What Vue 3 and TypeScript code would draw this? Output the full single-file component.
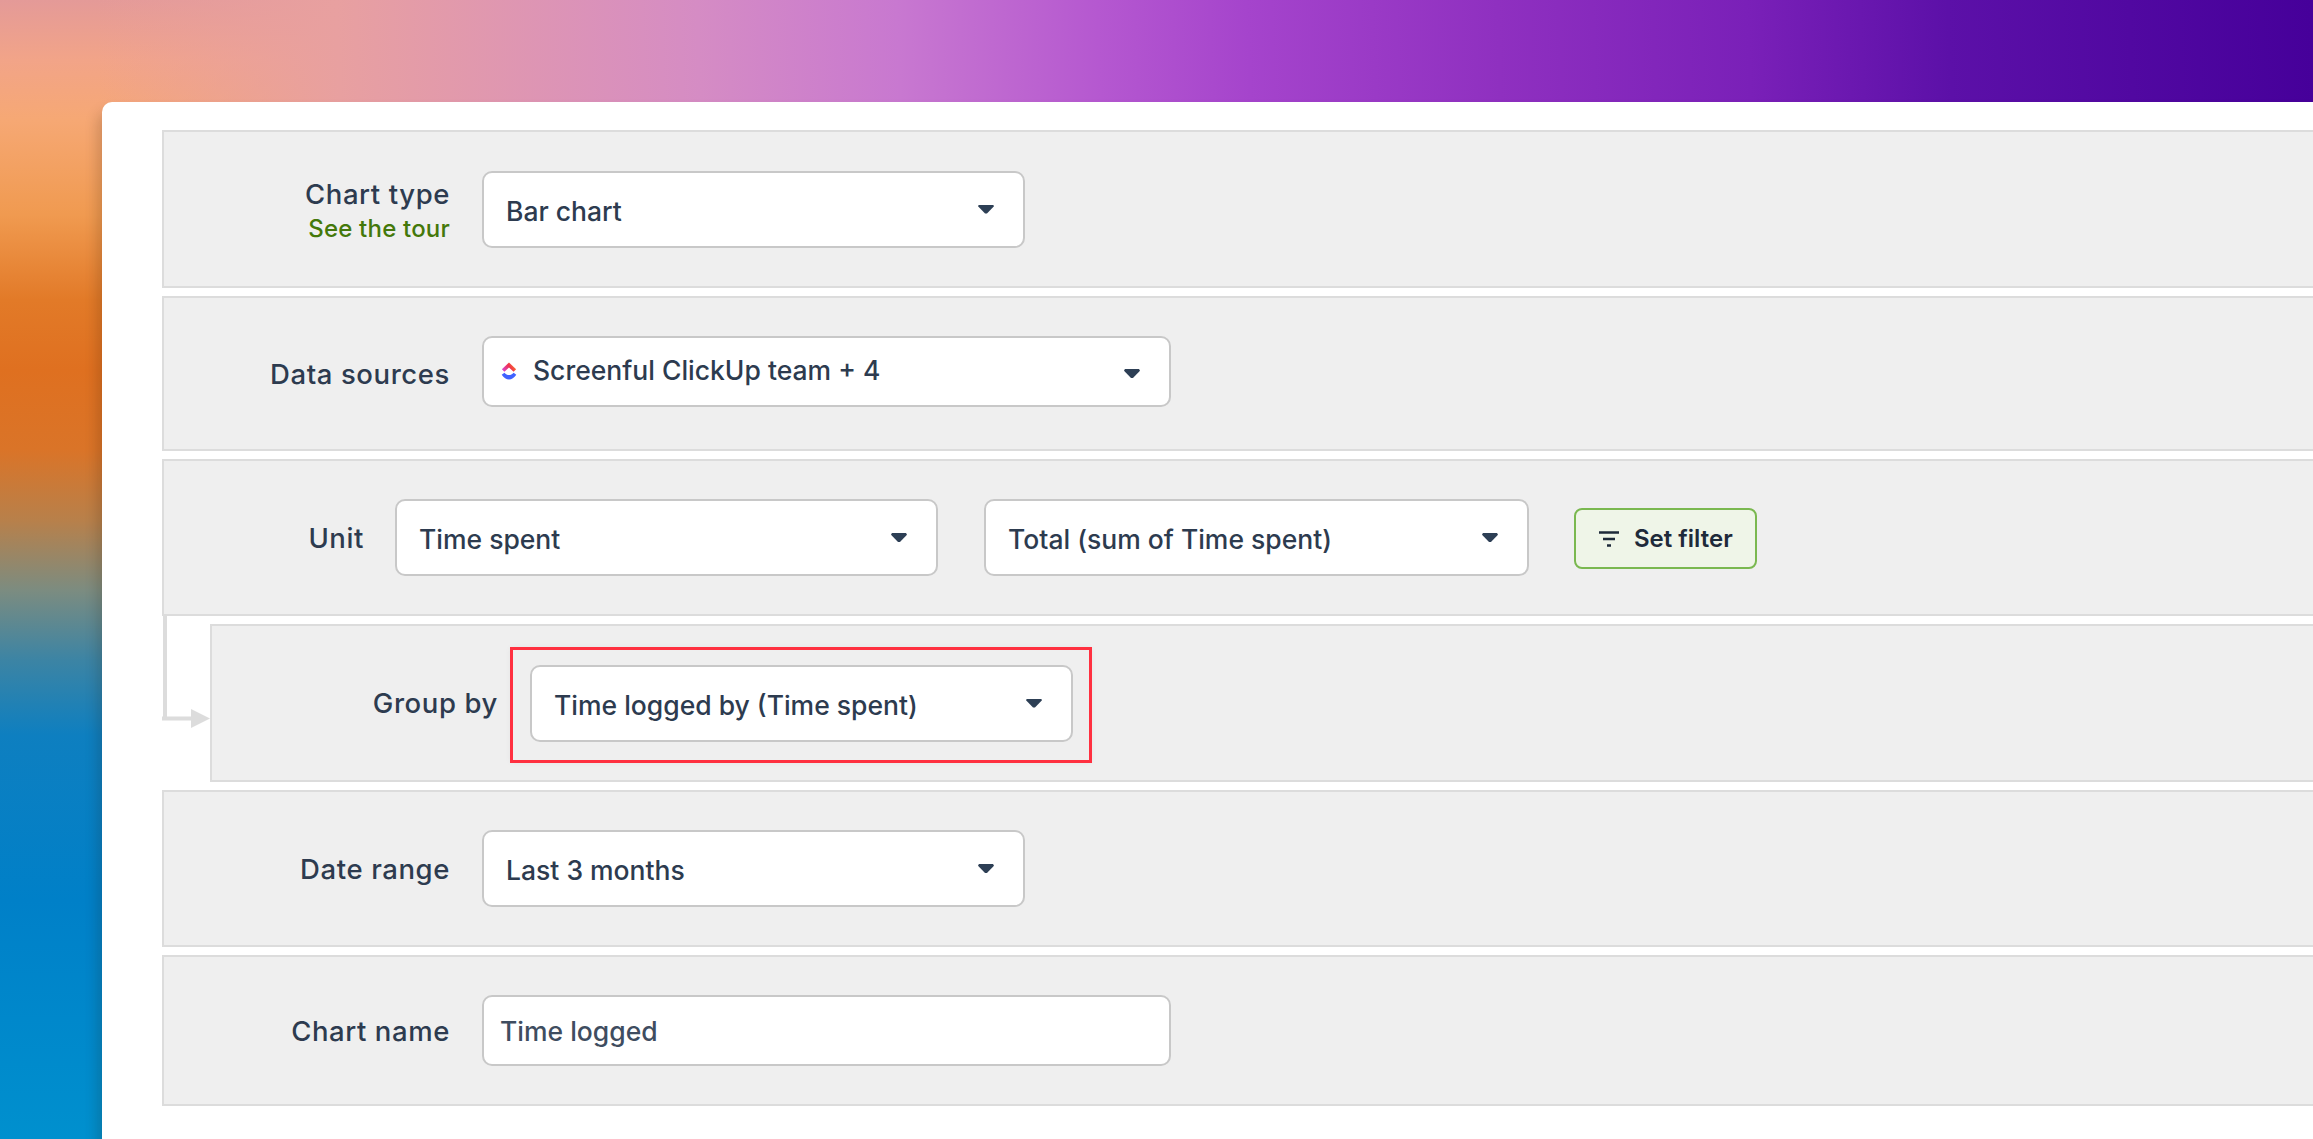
<script setup lang="ts">
interface Field { text: string; width: number }
const unitFields: Field[] = [
  { text: 'Time spent', width: 543 },
  { text: 'Total (sum of Time spent)', width: 545 }
]
</script>

<template>
  <div class="page">
    <main class="card">
      <section class="row h158">
        <div class="label with-link">
          <span>Chart type</span>
          <a class="tour">See the tour</a>
        </div>
        <div class="select wide-543 tall">
          <span class="value">Bar chart</span>
          <span class="caret"></span>
        </div>
      </section>

      <section class="row h155">
        <div class="label source-label">Data sources</div>
        <div class="select wide-689 short source-select">
          <span class="source">
            <svg class="logo" viewBox="0 0 20 24" width="16" height="19">
              <defs>
                <linearGradient id="cu-top" x1="0" x2="1" y1="0.6" y2="0.2">
                  <stop offset="0" stop-color="#d845c8" />
                  <stop offset="0.5" stop-color="#f0304f" />
                  <stop offset="1" stop-color="#fb8a20" />
                </linearGradient>
              </defs>
              <path d="M10 0.500 L19 9 L15.800 12.300 L10 7 L4.200 12.300 L1 9 Z" fill="url(#cu-top)" />
              <path d="M0.800 16 L4.200 13.500 C7.500 17.400 12.500 17.400 15.800 13.500 L19.200 16 C14 24 6 24 0.800 16 Z" fill="#3f62ff" />
            </svg>
            <span class="value source-text">Screenful ClickUp team + 4</span>
          </span>
          <span class="caret source-caret"></span>
        </div>
      </section>

      <section class="row h157 unit-row">
        <div class="label unit-label">Unit</div>
        <div
          v-for="field in unitFields"
          :key="field.text"
          class="select tall"
          :style="{ width: field.width + 'px' }"
        >
          <span class="value">{{ field.text }}</span>
          <span class="caret"></span>
        </div>
        <button class="filter" type="button">
          <svg viewBox="0 0 20 16" width="20" height="16">
            <path d="M0 1.500 H20 M4 8 H16 M8 14.500 H12" fill="none" stroke="#1e2a3a" stroke-width="2.600" />
          </svg>
          <span>Set filter</span>
        </button>
      </section>

      <div class="nested">
        <svg class="connector" viewBox="0 0 48 116" width="48" height="116">
          <path d="M3 0 V102.500 M0 102.500 H30" fill="none" stroke="#dcdcdc" stroke-width="4" />
          <path d="M29 93 L48 102.500 L29 112 Z" fill="#dcdcdc" />
        </svg>
        <section class="row h158">
          <div class="label">Group by</div>
          <div class="highlight">
            <div class="select wide-543 tall">
              <span class="value">Time logged by (Time spent)</span>
              <span class="caret"></span>
            </div>
          </div>
        </section>
      </div>

      <section class="row h157">
        <div class="label">Date range</div>
        <div class="select wide-543 tall">
          <span class="value">Last 3 months</span>
          <span class="caret"></span>
        </div>
      </section>

      <section class="row last">
        <div class="label">Chart name</div>
        <div class="select wide-689 short input">
          <span class="value">Time logged</span>
        </div>
      </section>
    </main>
  </div>
</template>

<style>
html,
body {
  margin: 0;
  height: 100%;
  overflow: hidden;
}
</style>

<style scoped>
.page {
  box-sizing: border-box;
  width: 2313px;
  height: 1139px;
  padding: 102px 0 0 102px;
  overflow: hidden;
  font-family: Inter, "Noto Sans", sans-serif;
  color: #2d3b4f;
  background:
    linear-gradient(88deg, rgba(232, 160, 160, 0) 0, rgba(232, 160, 160, 0) 100px, #e8a0a0 340px, #d58cc4 700px, #c878d0 900px, #b558d0 1100px, #a544cc 1250px, #8f30c0 1500px, #7a20b8 1750px, #5c10a8 1950px, #46009a 2313px) top / 100% 102px no-repeat,
    linear-gradient(180deg, #e49a98 0, #f2a488 60px, #f6a874 120px, #f09a50 215px, #e27a28 300px, #df7020 370px, #da7428 450px, #b8804a 520px, #7c8c80 590px, #3c84a4 660px, #0e7fc0 735px, #0080c8 900px, #0090ce 1139px);
}

.card {
  box-sizing: border-box;
  width: 2400px;
  height: 1100px;
  padding: 28px 0 0 60px;
  background: #fff;
  border-radius: 10px 0 0 0;
  box-shadow: -4px 10px 14px rgba(40, 20, 0, 0.2);
  display: flex;
  flex-direction: column;
}

.row {
  box-sizing: border-box;
  display: flex;
  align-items: center;
  margin-bottom: 8px;
  background: #efefef;
  border: 2px solid #dcdcdc;
  border-right: 0;
}

.h155 {
  height: 155px;
}

.h157 {
  height: 157px;
}

.h158 {
  height: 158px;
}

.row.last {
  height: 151px;
  margin-bottom: 0;
}

.label {
  box-sizing: border-box;
  flex: none;
  width: 286px;
  margin-right: 32px;
  text-align: right;
  font-size: 27.500px;
  font-weight: 500;
  letter-spacing: 0.6px;
  line-height: 34px;
}

.with-link {
  display: flex;
  flex-direction: column;
  align-items: flex-end;
  margin-top: 5px;
}

.source-label {
  margin-top: 1px;
}

.tour {
  font-size: 24px;
  letter-spacing: 0.2px;
  line-height: 36px;
  color: #44780a;
}

.select {
  box-sizing: border-box;
  flex: none;
  display: flex;
  align-items: center;
  justify-content: space-between;
  padding: 0 29px 0 22px;
  background: #fff;
  border: 2px solid #c8c8c8;
  border-radius: 10px;
  font-size: 26.500px;
  font-weight: 500;
}

.tall {
  height: 77px;
}

.tall .value {
  padding-top: 3px;
}

.short {
  height: 71px;
}

.wide-543 {
  width: 543px;
}

.wide-689 {
  width: 689px;
}

.source-select {
  margin-bottom: 5px;
}

.input {
  padding-left: 16px;
  color: #3f4d60;
}

.source {
  display: flex;
  align-items: center;
  gap: 16px;
  margin-left: -5px;
}

.source-text {
  margin-top: -3px;
}

.logo {
  flex: none;
}

.caret {
  flex: none;
  width: 16px;
  height: 9px;
  background: #2d3f55;
  clip-path: polygon(6% 0, 94% 0, 100% 20%, 56% 100%, 44% 100%, 0 20%);
}

.source-caret {
  margin-top: 5px;
}

.unit-label {
  width: 200px;
  margin-right: 31px;
}

.unit-row .select + .select {
  margin-left: 46px;
}

.filter {
  box-sizing: border-box;
  flex: none;
  display: flex;
  align-items: center;
  gap: 15px;
  width: 183px;
  height: 61px;
  margin-left: 45px;
  margin-top: 2px;
  padding: 0 0 0 23px;
  font: 600 24px Inter, "Noto Sans", sans-serif;
  color: #1e2a3a;
  background: #eff5e8;
  border: 2px solid #7ab850;
  border-radius: 8px;
}

.nested {
  position: relative;
  padding-left: 48px;
}

.connector {
  position: absolute;
  left: 0;
  top: -8px;
}

.highlight {
  position: relative;
  display: flex;
}

.highlight::after {
  content: "";
  position: absolute;
  left: -20px;
  right: -19px;
  top: -18px;
  bottom: -21px;
  border: 3px solid #ff3040;
  box-shadow: 0 0 6px rgba(0, 0, 0, 0.04);
  pointer-events: none;
}
</style>
